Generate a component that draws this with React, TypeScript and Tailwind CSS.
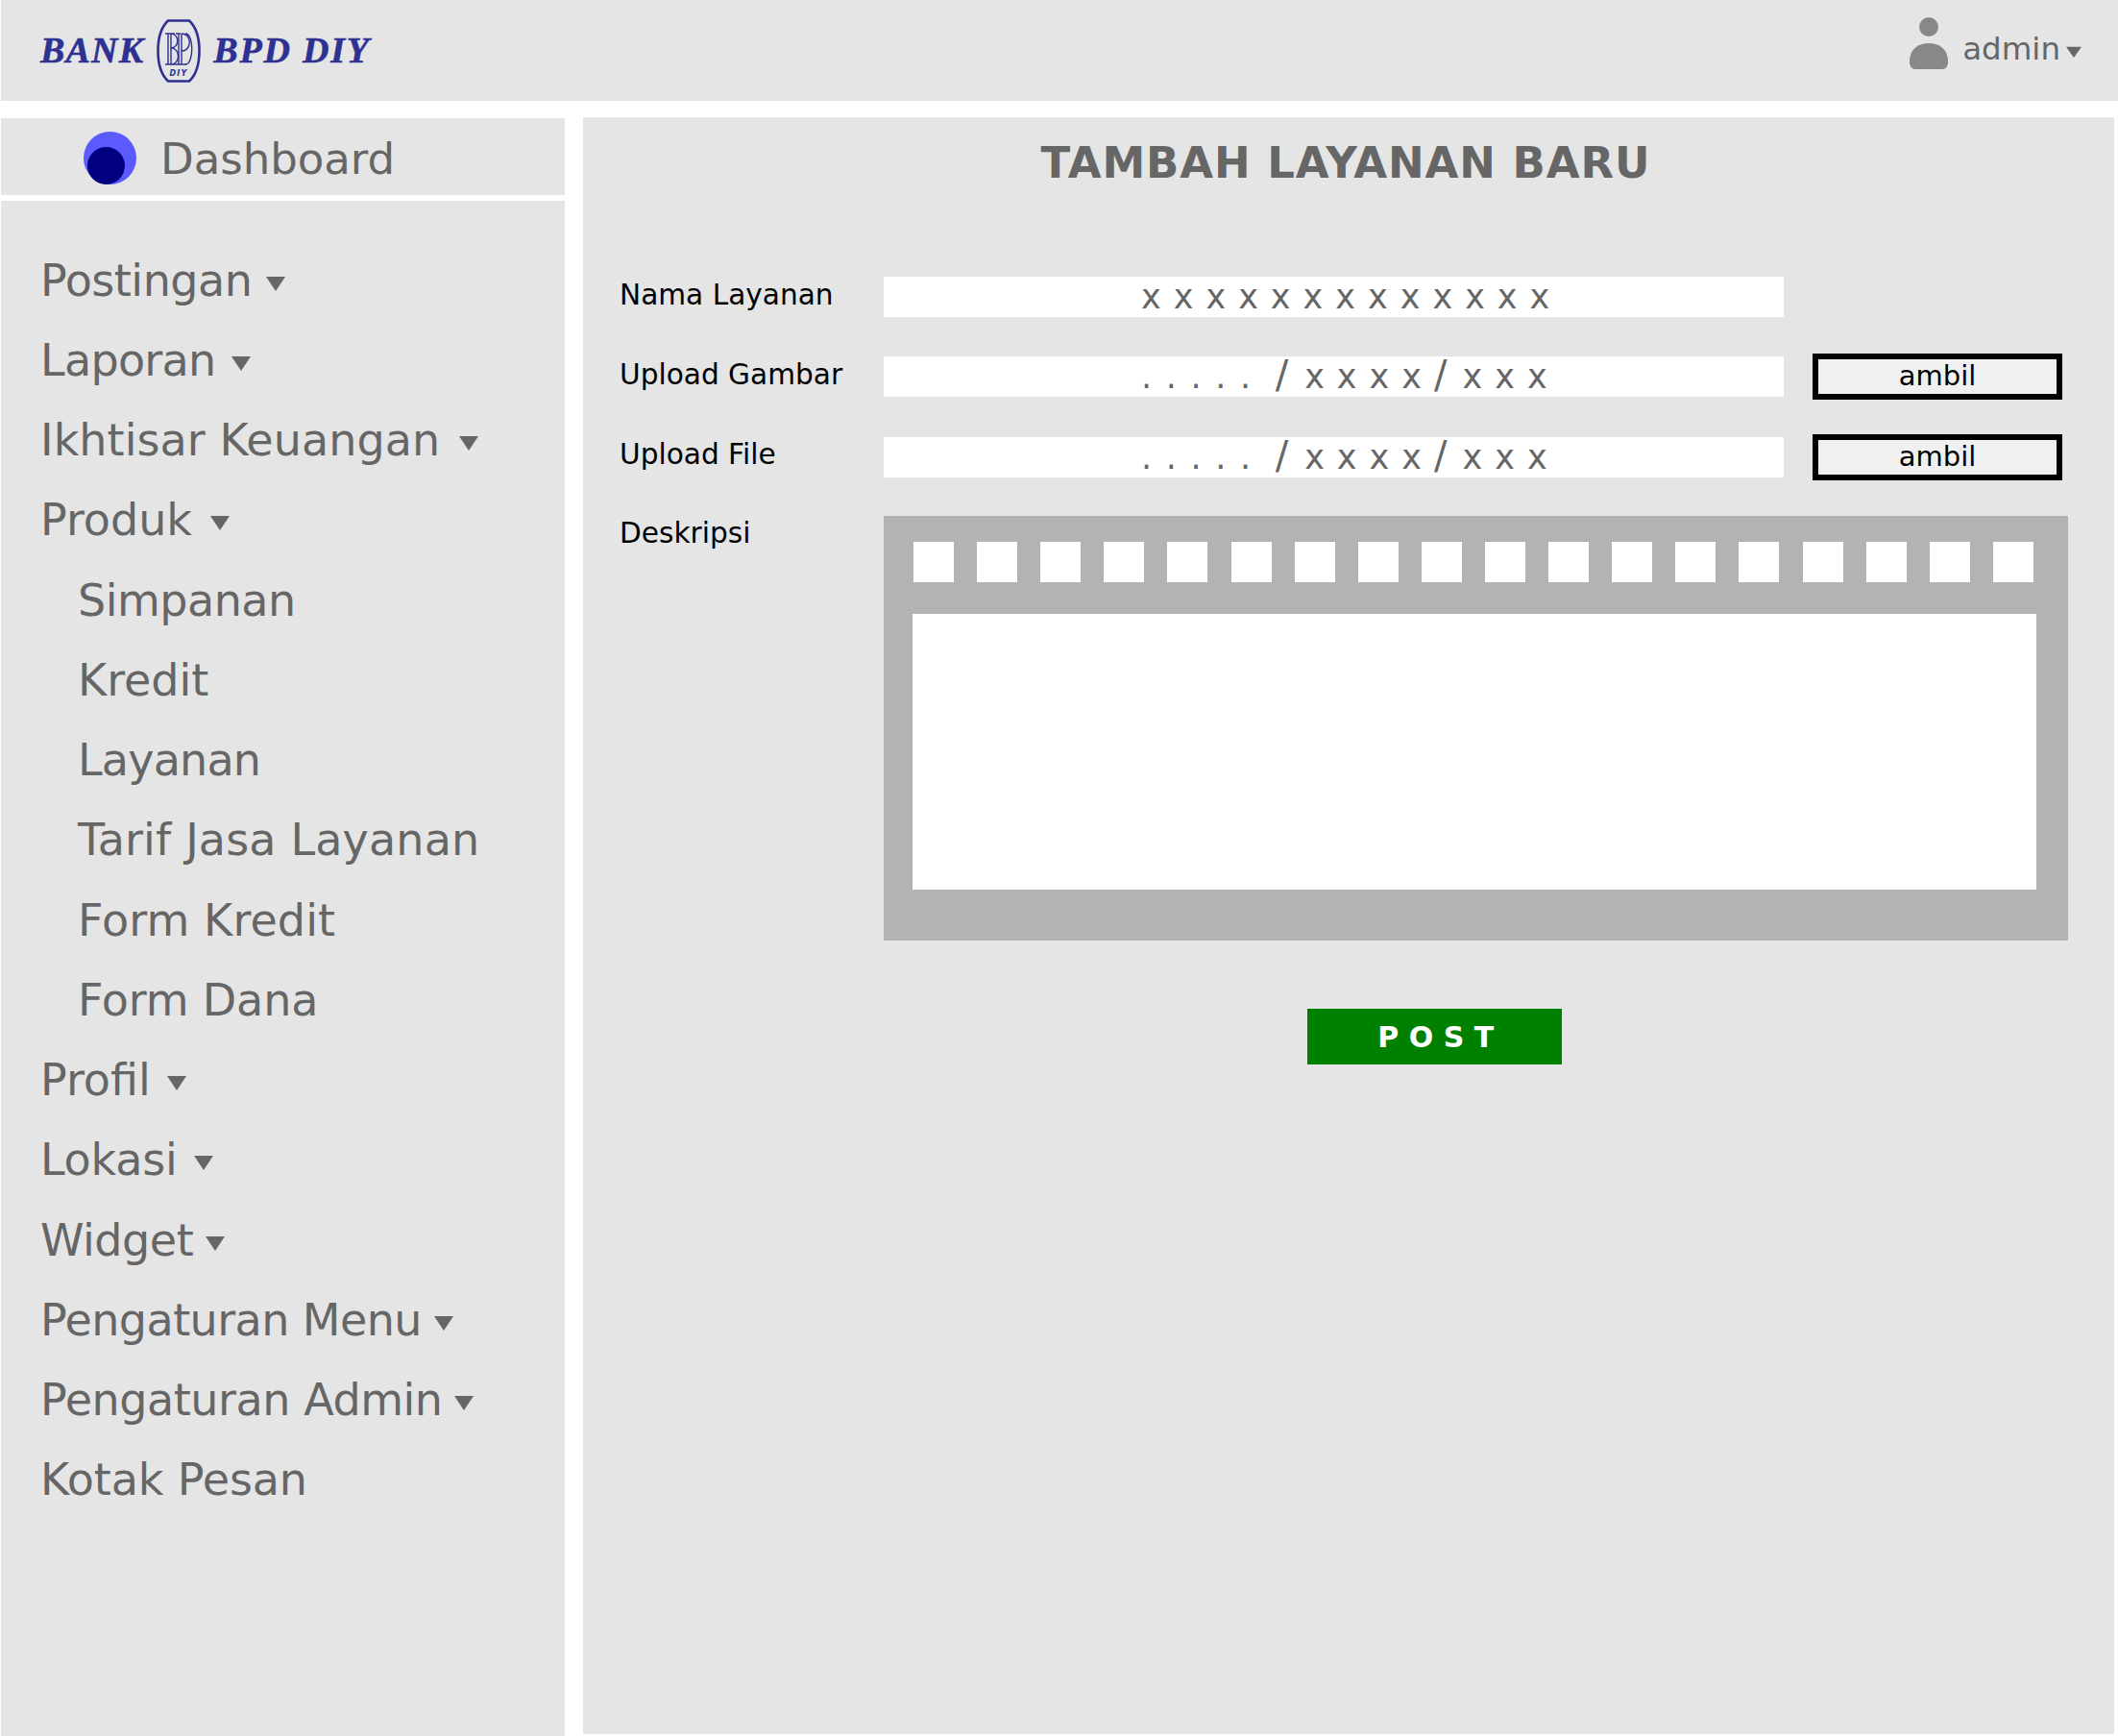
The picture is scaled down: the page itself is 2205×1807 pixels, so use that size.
const font = "font-['DejaVu_Sans',sans-serif]";

function Caret({ className = "" }: { className?: string }) {
  return (
    <svg viewBox="0 0 20 16" className={`w-[20px] h-[16px] shrink-0 ${className}`}>
      <path d="M0 1H20L10 16Z" fill="#666666" />
    </svg>
  );
}

function Emblem() {
  return (
    <svg viewBox="0 0 46 66" className="w-[46px] h-[66px] shrink-0">
      <path d="M12 1.5H34C41 8 44.5 20 44.5 33C44.5 46 41 58 34 64.5H12C5 58 1.5 46 1.5 33C1.5 20 5 8 12 1.5Z" fill="none" stroke="#2e3192" strokeWidth="2.6" />
      <g fill="none" stroke="#2e3192" strokeWidth="1.4">
        <path d="M9 15H19M9 47H19M12 15V47M15 15V47M15 15C24 15 24 30 15 30C25 30 25 47 15 47" />
        <path d="M20 15H25M23 15V47M26 15V47M19 47H31M26 15C37 15 37 33 26 33" />
        <path d="M30 15C39 15 39 47 30 47" />
      </g>
      <text x="23" y="59" textAnchor="middle" fontSize="8" fill="#2e3192" fontFamily="'DejaVu Sans',sans-serif">DIY</text>
    </svg>
  );
}

function PersonIcon() {
  return (
    <svg viewBox="0 0 40 54" className="w-[40px] h-[54px] shrink-0 -mt-[15px]">
      <circle cx="20" cy="10" r="10" fill="#888888" />
      <path d="M0 46C0 33 9 27 20 27C31 27 40 33 40 46C40 51 38 54 34 54H6C2 54 0 51 0 46Z" fill="#888888" />
    </svg>
  );
}

const menu: { label: string; caret?: string; sub?: boolean; track?: string }[] = [
  { label: "Postingan", caret: "ml-[14px]", track: "tracking-[-0.47px]" },
  { label: "Laporan", caret: "ml-[16px]", track: "tracking-[-0.7px]" },
  { label: "Ikhtisar Keuangan", caret: "ml-[20px]", track: "tracking-[0.06px]" },
  { label: "Produk", caret: "ml-[19px]" },
  { label: "Simpanan", sub: true, track: "tracking-[-0.5px]" },
  { label: "Kredit", sub: true },
  { label: "Layanan", sub: true, track: "tracking-[-0.8px]" },
  { label: "Tarif Jasa Layanan", sub: true, track: "tracking-[0.16px]" },
  { label: "Form Kredit", sub: true, track: "tracking-[0.12px]" },
  { label: "Form Dana", sub: true, track: "tracking-[-0.14px]" },
  { label: "Profil", caret: "ml-[17px]" },
  { label: "Lokasi", caret: "ml-[17px]", track: "tracking-[-0.2px]" },
  { label: "Widget", caret: "ml-[13px]", track: "tracking-[-0.45px]" },
  { label: "Pengaturan Menu", caret: "ml-[13px]", track: "tracking-[-0.56px]" },
  { label: "Pengaturan Admin", caret: "ml-[12px]", track: "tracking-[-0.44px]" },
  { label: "Kotak Pesan", track: "tracking-[-0.12px]" },
];

function Row({ label, children, button }: { label: string; children: React.ReactNode; button?: boolean }) {
  return (
    <div className="flex items-center h-[42px]">
      <div className="w-[275px] shrink-0 text-[29.6px] leading-[42px] text-black -mt-[5px]">{label}</div>
      <div className="w-[937px] h-[42px] bg-white shrink-0 pl-[268px] text-[35px] leading-[42px] text-[#666666] tracking-[13px] whitespace-pre">{children}</div>
      {button && (
        <div className="ml-[30px] w-[260px] h-[48px] border-[6px] border-black bg-[#f0f0f0] text-center text-[29px] leading-[34px] text-black shrink-0">ambil</div>
      )}
    </div>
  );
}

function FilePath() {
  return (
    <>
      <span className="tracking-[14.6px]">.....</span>
      <span className="ml-[11px] tracking-normal text-[40px] leading-[0]">/</span>
      <span className="ml-[17px]">xxxx</span>
      <span className="tracking-normal text-[40px] leading-[0]">/</span>
      <span className="ml-[16px]">xxx</span>
    </>
  );
}

export default function App() {
  return (
    <div className={`${font} w-[2205px] h-[1807px] bg-white pl-[1px] overflow-hidden flex flex-col`}>
      <header className="h-[105px] bg-[#e5e5e5] flex items-center justify-between pl-[41px] pr-[36px] shrink-0">
        <div className="flex items-center gap-[13px] font-['Liberation_Serif',serif] italic font-bold text-[38px] tracking-[1.2px] [-webkit-text-stroke:0.6px_#2e3192] text-[#2e3192]">
          <span>BANK</span>
          <Emblem />
          <span className="tracking-[1.8px]">BPD DIY</span>
        </div>
        <div className="flex items-center text-[32.5px] text-[#666666]">
          <PersonIcon />
          <span className="ml-[15px] -mt-[2px]">admin</span>
          <Caret className="ml-[4px] mt-[2px] scale-x-[0.8] scale-y-[0.75]" />
        </div>
      </header>
      <div className="flex mt-[17px] flex-1 min-h-0">
        <aside className="w-[587px] shrink-0 flex flex-col gap-[6px] mt-[1px]">
          <div className="h-[80px] bg-[#e5e5e5] flex items-center pl-[86px] shrink-0">
            <div className="relative w-[55px] h-[55px] rounded-full bg-[#5a5aff] shrink-0 mt-[2px]">
              <div className="absolute left-[4px] top-[16px] w-[39px] h-[39px] rounded-full bg-[#000080]" />
            </div>
            <span className="ml-[25px] text-[45px] text-[#666666] mt-[6px]">Dashboard</span>
          </div>
          <nav className="flex-1 bg-[#e5e5e5] pt-[41px] pl-[41px] text-[46px] text-[#666666]">
            {menu.map((m) => (
              <div key={m.label} className={`h-[83.25px] flex items-center leading-none ${m.sub ? "pl-[39px]" : ""}`}>
                <span className={m.track}>{m.label}</span>
                {m.caret && <Caret className={`${m.caret} mt-[6px]`} />}
              </div>
            ))}
          </nav>
        </aside>
        <main className="w-[1594px] ml-[19px] mb-[2px] bg-[#e5e5e5] pl-[38px] pr-[48px] pt-[19px]">
          <h1 className="text-[45px] font-bold text-[#666666] text-center leading-[58px] tracking-[0.9px] mr-[-4px]">TAMBAH LAYANAN BARU</h1>
          <div className="mt-[89px] flex flex-col gap-[41.3px]">
            <Row label="Nama Layanan">xxxxxxxxxxxxx</Row>
            <Row label="Upload Gambar" button><FilePath /></Row>
            <Row label="Upload File" button><FilePath /></Row>
          </div>
          <div className="flex mt-[40px]">
            <div className="w-[275px] shrink-0 text-[29.6px] leading-[42px] text-black -mt-[3px]">Deskripsi</div>
            <div className="w-[1233px] h-[442px] bg-[#b3b3b3] px-[30px] pt-[27px]">
              <div className="flex justify-between pr-[6px] pl-[1px]">
                {Array.from({ length: 18 }).map((_, i) => (
                  <div key={i} className="w-[42px] h-[42px] bg-white" />
                ))}
              </div>
              <div className="mt-[33px] mr-[3px] h-[287px] bg-white" />
            </div>
          </div>
          <div className="mt-[71px] ml-[716px] w-[265px] h-[58px] bg-[#008000] flex items-center justify-center text-white font-bold text-[30px] tracking-[10.5px] pl-[13px] pt-[2px]">POST</div>
        </main>
      </div>
    </div>
  );
}
